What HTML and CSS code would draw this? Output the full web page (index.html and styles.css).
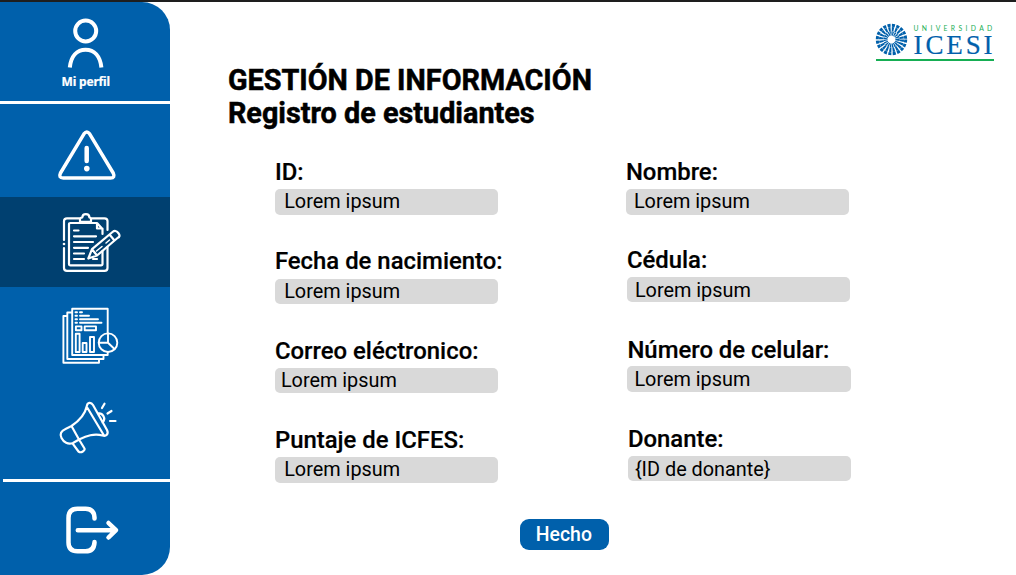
FILE: index.html
```html
<!DOCTYPE html>
<html lang="es">
<head>
<meta charset="utf-8">
<title>Registro de estudiantes</title>
<link rel="stylesheet" href="styles.css">
</head>
<body>
<div class="app">
  <nav class="sidebar">
    <a class="profile">
      <svg class="icon" width="60" height="52" viewBox="56 16 60 52" stroke-width="4"><circle cx="85.700" cy="31" r="10.500"/><path d="M69.800 67.500C71 56 77 49.700 85.600 49.700S100.200 56 101.400 67.500"/></svg>
      <span class="profile-name">Mi perfil</span>
    </a>
    <a class="item alert">
      <svg class="icon" width="170" height="93" viewBox="0 104 170 93" stroke-width="3.500"><path d="M84 133.800Q86.800 130 89.600 133.800L113.200 173Q115.500 178 110.500 178H63.300Q58.200 178 60.500 173Z"/><path d="M86.700 148V161" stroke-width="4.500"/><circle class="solid" cx="86.800" cy="168.600" r="2.800"/></svg>
    </a>
    <a class="item active">
      <svg class="icon" width="170" height="90" viewBox="0 197 170 90" stroke-width="2.200"><path d="M64 240V221Q64 218.300 67 218.300H80M91 218.300H104.500Q107.500 218.300 107.500 221V230M64 248V268Q64 270.800 67 270.800H104.500Q107.500 270.800 107.500 268V247M69 224.200Q69 223 70.500 223H97L102.500 229V234M69 224V264Q69 265.300 70.500 265.300H101Q102.500 265.300 102.500 264V251M80 221.800V219Q80 217.500 82.300 217.500C82.500 213 89.300 213 89.400 217.500Q91 217.500 91 219V221.800ZM97 223V228.500H102.500"/><path d="M74 230.500H78.500M74 236.300H96M74 242H93M74 247.800H88M74 253.500H84M74 259H84M93 259H97"/><path d="M88.300 258.500L92 249.200L112.500 232Q115.500 229.500 118.300 233T117.500 238L97 255.500ZM92 249.200L97 255.500M109.500 234.500L114.500 240.500"/><path d="M96.500 251L102 246.500M106 243L109.500 240" stroke-width="1.500"/><circle class="solid" cx="64" cy="244" r="1.300"/></svg>
    </a>
    <a class="item report">
      <svg class="icon" width="170" height="96" viewBox="0 287 170 96" stroke-width="1.900"><path d="M107.700 333.500V308.700H72.200V355H107.700V352M72 312.500H67.300V359H103.500V355.500M67 316H63.400V362.700H99V359.500"/><path d="M75.500 312.200H77M80 312.200H82M75.500 315.700H77M80 315.700H89M75.500 319.200H77M80 319.200H98M75.500 322.800H77M80 322.800H101.500M75.900 326.400H81.500V330.300H75.900ZM84.700 326.400H96V330.300H84.700ZM75.800 333.700H79.600V352H75.800ZM82.700 343H86.500V352H82.700ZM90 337H94V352H90Z"/><circle class="disc" cx="108" cy="342.700" r="9.300"/><path d="M108 333.500V342.700L114.500 349M108 342.700H98.800"/></svg>
    </a>
    <a class="item news">
      <svg class="icon" width="170" height="96" viewBox="0 383 170 96" stroke-width="2.200"><path d="M71.500 426C79 421 85 415 87 405.500C87.300 402.500 91 401.500 93 405L107 430C109 434 106 436.700 102.500 435.500C94 433 86.500 436 79 439.500L73 443C68 445 63.500 442 61.500 438S61 431 65.500 429ZM71.500 426L79 439.500M87.500 408L104 435.500M72.500 443.300L78.500 451.500Q80.500 453 82.800 451.500T84.500 448.500L79 439.500M97.800 413.500C102.500 412.500 106.500 418.500 102.500 422.500"/><path d="M102 408L104.500 403.700M107.500 413.500L111.500 411M110 421H115.500"/></svg>
    </a>
    <div class="rule"></div>
    <a class="item exit">
      <svg class="icon" width="170" height="92" viewBox="0 482 170 92" stroke-width="4.500"><path d="M94.500 518.500V517.500Q94 508.800 85.500 508.800H77.500Q68.500 508.800 68.500 518V542.500Q68.500 551.300 77.500 551.300H85.500Q94 551.300 94.500 542.500V542"/><path d="M77.800 530.200H115.500M108.500 523L116 530.200L108.500 537.500"/></svg>
    </a>
  </nav>
  <main class="content">
    <header class="top">
      <h1 class="title">GESTIÓN DE INFORMACIÓN<br>Registro de estudiantes</h1>
      <div class="logo">
        <svg class="seal" width="33" height="33" viewBox="874.500 23.500 33 33">
          <circle cx="891" cy="40" r="14.200" stroke-width="3" stroke-dasharray="3.100 1.360"/>
          <circle cx="891" cy="40" r="10.300" stroke-width="4.400" stroke-dasharray="2.020 1.216"/>
          <circle cx="891" cy="40" r="6" stroke-width="4.200" stroke-dasharray="1.250 .635"/>
        </svg>
        <div class="logo-words">
          <span class="logo-small">UNIVERSIDAD</span>
          <span class="logo-name">ICESI</span>
        </div>
      </div>
    </header>
    <form class="form">
      <div class="column">
        <div class="field"><label class="label">ID:</label><div class="input">Lorem ipsum</div></div>
        <div class="field"><label class="label">Fecha de nacimiento:</label><div class="input">Lorem ipsum</div></div>
        <div class="field"><label class="label">Correo eléctronico:</label><div class="input tight">Lorem ipsum</div></div>
        <div class="field last"><label class="label">Puntaje de ICFES:</label><div class="input">Lorem ipsum</div></div>
      </div>
      <div class="column second">
        <div class="field"><label class="label">Nombre:</label><div class="input">Lorem ipsum</div></div>
        <div class="field cedula"><label class="label">Cédula:</label><div class="input">Lorem ipsum</div></div>
        <div class="field phone"><label class="label">Número de celular:</label><div class="input">Lorem ipsum</div></div>
        <div class="field donor"><label class="label">Donante:</label><div class="input">{ID de donante}</div></div>
      </div>
    </form>
    <button class="done" type="button">Hecho</button>
  </main>
</div>
</body>
</html>
```
FILE: styles.css
```css
* { box-sizing: border-box; }
body { margin: 0; background: #fff; color: #000; font-family: Roboto, sans-serif; }
.app { display: flex; height: 575px; border-top: 2px solid #1e1e1e; overflow: hidden; }
.sidebar { display: flex; flex-direction: column; flex: none; width: 170.400px; height: 573px; background: #0060ab; border-radius: 0 28px 28px 0; overflow: hidden; }
.icon { display: block; flex: none; fill: none; stroke: #fff; stroke-linecap: round; stroke-linejoin: round; }
.solid { fill: #fff; stroke: none; }
.disc { fill: #0060ab; }
.profile { display: flex; flex-direction: column; align-items: center; height: 102px; padding: 14px 0 0 1px; border-bottom: 3px solid #fff; }
.profile .icon { stroke-linecap: butt; }
.profile-name { margin-top: 6px; color: #fff; font: 700 12px/16px "Noto Sans", sans-serif; letter-spacing: -.2px; -webkit-text-stroke: .2px #fff; }
.item { display: block; flex: none; }
.active { background: #004070; }
.rule { flex: none; height: 3px; margin: 0 0 0 3px; background: #fff; }
.content { display: flex; flex-direction: column; flex: 1; padding: 20px 22.500px 0 57.500px; }
.top { display: flex; justify-content: space-between; height: 136px; }
.title { margin: 41.600px 0 0; font-size: 28.800px; line-height: 33.500px; font-weight: 700; -webkit-text-stroke: .5px #000; }
.logo { display: flex; justify-content: space-between; width: 118px; height: 39px; padding-top: 1.500px; border-bottom: 2px solid #16ae54; }
.seal { flex: none; margin: -1px 0 0 -1px; fill: none; stroke: #0060ab; }
.logo-words { display: flex; flex-direction: column; width: 80px; padding-top: 0; }
.logo-small { color: #16ae54; font: 6.800px/8px Lato, sans-serif; letter-spacing: 3.350px; white-space: nowrap; }
.logo-name { height: 22px; color: #0060ab; font: 27px/26px "Liberation Serif", serif; letter-spacing: 2.900px; -webkit-text-stroke: .2px #0060ab; white-space: nowrap; }
.form { display: flex; gap: 128px; margin-left: 47px; }
.column { width: 223px; }
.field { height: 89.300px; }
.label { display: block; height: 31.300px; font-size: 23.900px; line-height: 28.800px; font-weight: 500; white-space: nowrap; -webkit-text-stroke: .2px #000; }
.input { height: 25.500px; padding-left: 9.300px; border-radius: 5px; background: #d9d9d9; font-size: 19.850px; line-height: 26px; }
.tight { padding-left: 6px; }
.second .field { height: 89.500px; }
.second .input { padding-left: 8px; line-height: 27.200px; }
.second .field:first-child { height: 87.700px; }
.second .field:first-child .input { line-height: 26px; }
.second .cedula { margin: 0 -1px 0 1px; }
.second .phone { margin: 0 -2px 0 1.500px; }
.second .phone .label { line-height: 30px; }
.second .phone .input { padding-left: 7px; }
.second .donor { margin: 0 -2px 0 2px; }
.second .donor .input { padding-left: 7px; }
.done { align-self: flex-start; width: 89px; height: 31px; margin: 3.500px 0 0 292px; padding: 0 1px 0 0; border: 0; border-radius: 9px; background: #0060ab; color: #fff; font: 500 19.400px/31.500px Roboto, sans-serif; }
```
